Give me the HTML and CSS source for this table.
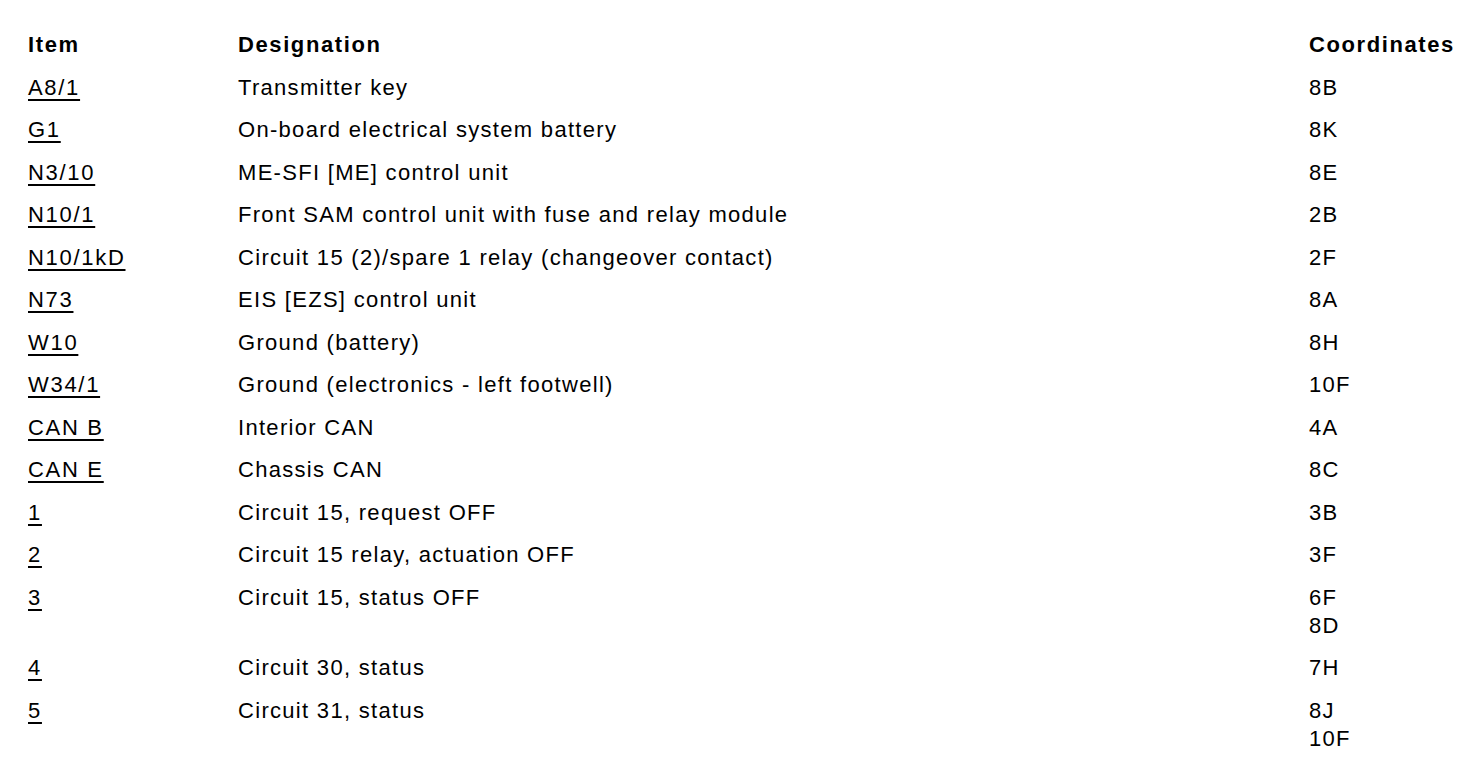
FILE: index.html
```html
<!DOCTYPE html>
<html>
<head>
<meta charset="utf-8">
<link rel="stylesheet" href="styles.css">
</head>
<body>
<div class="legend">
  <div class="row head">
    <div class="c-item">Item</div>
    <div class="c-des">Designation</div>
    <div class="c-coord">Coordinates</div>
  </div>
  <div class="row"><div class="c-item"><a href="#">A8/1</a></div><div class="c-des">Transmitter key</div><div class="c-coord">8B</div></div>
  <div class="row"><div class="c-item"><a href="#">G1</a></div><div class="c-des">On-board electrical system battery</div><div class="c-coord">8K</div></div>
  <div class="row"><div class="c-item"><a href="#">N3/10</a></div><div class="c-des">ME-SFI [ME] control unit</div><div class="c-coord">8E</div></div>
  <div class="row"><div class="c-item"><a href="#">N10/1</a></div><div class="c-des">Front SAM control unit with fuse and relay module</div><div class="c-coord">2B</div></div>
  <div class="row"><div class="c-item"><a href="#">N10/1kD</a></div><div class="c-des">Circuit 15 (2)/spare 1 relay (changeover contact)</div><div class="c-coord">2F</div></div>
  <div class="row"><div class="c-item"><a href="#">N73</a></div><div class="c-des">EIS [EZS] control unit</div><div class="c-coord">8A</div></div>
  <div class="row"><div class="c-item"><a href="#">W10</a></div><div class="c-des">Ground (battery)</div><div class="c-coord">8H</div></div>
  <div class="row"><div class="c-item"><a href="#">W34/1</a></div><div class="c-des">Ground (electronics - left footwell)</div><div class="c-coord">10F</div></div>
  <div class="row"><div class="c-item"><a href="#">CAN B</a></div><div class="c-des">Interior CAN</div><div class="c-coord">4A</div></div>
  <div class="row"><div class="c-item"><a href="#">CAN E</a></div><div class="c-des">Chassis CAN</div><div class="c-coord">8C</div></div>
  <div class="row"><div class="c-item"><a href="#">1</a></div><div class="c-des">Circuit 15, request OFF</div><div class="c-coord">3B</div></div>
  <div class="row"><div class="c-item"><a href="#">2</a></div><div class="c-des">Circuit 15 relay, actuation OFF</div><div class="c-coord">3F</div></div>
  <div class="row"><div class="c-item"><a href="#">3</a></div><div class="c-des">Circuit 15, status OFF</div><div class="c-coord">6F<br>8D</div></div>
  <div class="row"><div class="c-item"><a href="#">4</a></div><div class="c-des">Circuit 30, status</div><div class="c-coord">7H</div></div>
  <div class="row"><div class="c-item"><a href="#">5</a></div><div class="c-des">Circuit 31, status</div><div class="c-coord">8J<br>10F</div></div>
</div>
</body>
</html>
```
FILE: styles.css
```css
html, body {
  margin: 0;
  background: #fff;
}
body {
  font-family: "Liberation Sans", Arial, sans-serif;
  font-size: 22px;
  letter-spacing: 1.3px;
  color: #000;
}
.legend {
  padding: 24px 0 0 28px;
}
.row {
  display: grid;
  grid-template-columns: 210px 1071px 1fr;
  line-height: 28px;
  padding: 7px 0 7.5px;
}
.head {
  font-weight: bold;
  letter-spacing: 1.6px;
}
.c-item a {
  color: #000;
  text-decoration: underline;
  text-underline-offset: 4px;
  letter-spacing: 1.7px;
}
```
